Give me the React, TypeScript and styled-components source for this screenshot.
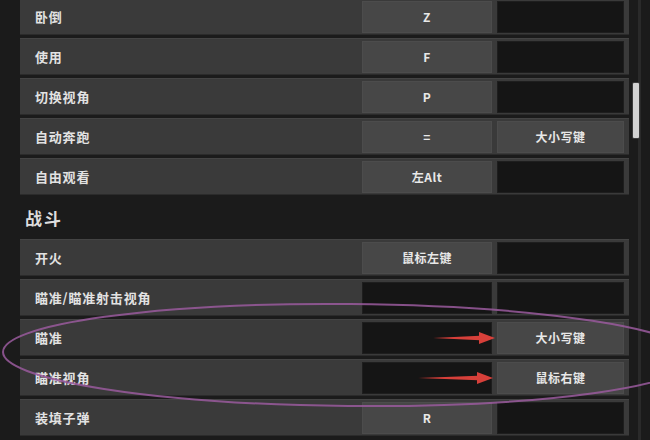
import React from "react";
import styled, { createGlobalStyle } from "styled-components";

const Global = createGlobalStyle`
  html, body { margin: 0; padding: 0; background: #1b1b1b; }
  body { width: 650px; height: 440px; overflow: hidden; font-family: "Noto Sans CJK SC", "Noto Sans", sans-serif; }
`;

const Page = styled.div`
  position: relative;
  width: 650px;
  height: 440px;
  overflow: hidden;
  display: flex;
  background: #1b1b1b;
`;

const Content = styled.div`
  flex: 1;
  padding-left: 20px;
  margin-top: -2px;
  display: flex;
  flex-direction: column;
  gap: 3px;
`;

const Row = styled.div`
  height: 37px;
  flex: none;
  display: flex;
  align-items: center;
  background: #3a3a3a;
  box-shadow: inset 0 1px 0 rgba(255, 255, 255, 0.05), inset 0 -1px 0 rgba(0, 0, 0, 0.25);
  padding-right: 5px;
  gap: 5px;
`;

const Label = styled.div`
  flex: 1;
  padding-left: 15px;
  color: #e2e2e2;
  font-size: 13px;
  font-weight: 700;
  letter-spacing: 0.8px;
`;

const KeyCell = styled.div<{ $filled: boolean; $wide?: boolean }>`
  width: ${(p) => (p.$wide ? 130 : 127)}px;
  height: 32px;
  display: flex;
  align-items: center;
  justify-content: center;
  background: ${(p) => (p.$filled ? "#474747" : "#151515")};
  box-shadow: inset 0 0 0 1px ${(p) => (p.$filled ? "rgba(255,255,255,0.03)" : "rgba(255,255,255,0.04)")};
  color: #e8e8e8;
  font-size: 12px;
  font-weight: 700;
  letter-spacing: 0.5px;
`;

const Heading = styled.div`
  height: 38px;
  flex: none;
  display: flex;
  align-items: center;
  padding-left: 5px;
  color: #dedede;
  font-size: 17px;
  font-weight: 700;
  letter-spacing: 2px;
`;

const ScrollColumn = styled.div`
  width: 21px;
  flex: none;
  position: relative;
  display: flex;
  justify-content: flex-start;
  padding-left: 8px;
  box-sizing: border-box;
`;

const Track = styled.div`
  width: 3px;
  height: 100%;
  margin-left: 1px;
  background: #2a2a2a;
`;

const Thumb = styled.div`
  position: absolute;
  left: 4px;
  top: 83px;
  width: 6px;
  height: 55px;
  border-radius: 1px;
  background: #d2d2d2;
  box-shadow: 0 0 0 1px #3a3a3a;
`;

const Overlay = styled.svg`
  position: absolute;
  left: 0;
  top: 0;
  pointer-events: none;
`;

type Item = { label: string; k1?: string; k2?: string };

const movement: Item[] = [
  { label: "卧倒", k1: "Z" },
  { label: "使用", k1: "F" },
  { label: "切换视角", k1: "P" },
  { label: "自动奔跑", k1: "=", k2: "大小写键" },
  { label: "自由观看", k1: "左Alt" },
];

const combat: Item[] = [
  { label: "开火", k1: "鼠标左键" },
  { label: "瞄准/瞄准射击视角" },
  { label: "瞄准", k2: "大小写键" },
  { label: "瞄准视角", k2: "鼠标右键" },
  { label: "装填子弹", k1: "R" },
];

const BindRow = ({ item }: { item: Item }) => (
  <Row>
    <Label>{item.label}</Label>
    <KeyCell $filled={!!item.k1} $wide>
      {item.k1}
    </KeyCell>
    <KeyCell $filled={!!item.k2}>{item.k2}</KeyCell>
  </Row>
);

const Arrow = ({ x1, x2, y }: { x1: number; x2: number; y: number }) => {
  const hx = x2 - 15;
  return (
    <g fill="#e8443e" opacity={0.92}>
      <polygon points={`${x1},${y} ${hx},${y - 2.2} ${hx},${y + 2.2}`} />
      <polygon points={`${hx - 1},${y - 6} ${x2},${y} ${hx - 1},${y + 6}`} />
    </g>
  );
};

export default function App() {
  return (
    <>
      <Global />
      <Page>
        <Content>
          {movement.map((m) => (
            <BindRow key={m.label} item={m} />
          ))}
          <Heading>战斗</Heading>
          {combat.map((m) => (
            <BindRow key={m.label} item={m} />
          ))}
        </Content>
        <ScrollColumn>
          <Track />
          <Thumb />
        </ScrollColumn>
        <Overlay width={650} height={440} viewBox="0 0 650 440">
          <ellipse
            cx={349}
            cy={355}
            rx={346}
            ry={51}
            fill="none"
            stroke="#9a5a9e"
            strokeWidth={2}
            opacity={0.85}
            transform="rotate(0.5 349 355)"
          />
          <Arrow x1={433} x2={495} y={338} />
          <Arrow x1={418} x2={493} y={378} />
        </Overlay>
      </Page>
    </>
  );
}
